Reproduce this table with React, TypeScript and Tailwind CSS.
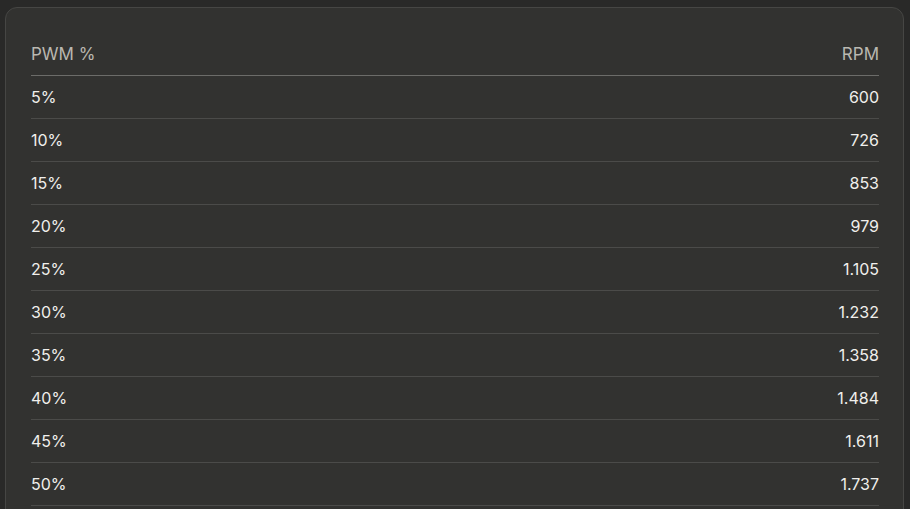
import React from "react";

const rows: [string, string][] = [
  ["5%", "600"],
  ["10%", "726"],
  ["15%", "853"],
  ["20%", "979"],
  ["25%", "1.105"],
  ["30%", "1.232"],
  ["35%", "1.358"],
  ["40%", "1.484"],
  ["45%", "1.611"],
  ["50%", "1.737"],
];

export default function App() {
  return (
    <div
      className="w-[910px] h-[509px] overflow-hidden bg-[#292928] pt-[7px] pl-[5px] pr-[6px]"
      style={{ fontFamily: "Inter, 'Noto Sans', sans-serif" }}
    >
      <div className="rounded-t-[12px] border border-[#464644] bg-[#323230] pl-[25px] pr-6 pt-6 h-[600px]">
        <table className="w-full border-collapse text-[16px]">
          <thead>
            <tr className="h-[43px] border-b border-[#6c6c69]">
              <th className="text-left font-normal text-[17px] text-[#bab8b0] pt-[3px]">PWM %</th>
              <th className="text-right font-normal text-[17px] text-[#bab8b0] pt-[3px]">RPM</th>
            </tr>
          </thead>
          <tbody>
            {rows.map(([p, r]) => (
              <tr key={p} className="h-[43px] border-b border-[#4b4b49]">
                <td className="text-left text-[#f0efec]">{p}</td>
                <td className="text-right text-[#f0efec]">{r}</td>
              </tr>
            ))}
          </tbody>
        </table>
      </div>
    </div>
  );
}
